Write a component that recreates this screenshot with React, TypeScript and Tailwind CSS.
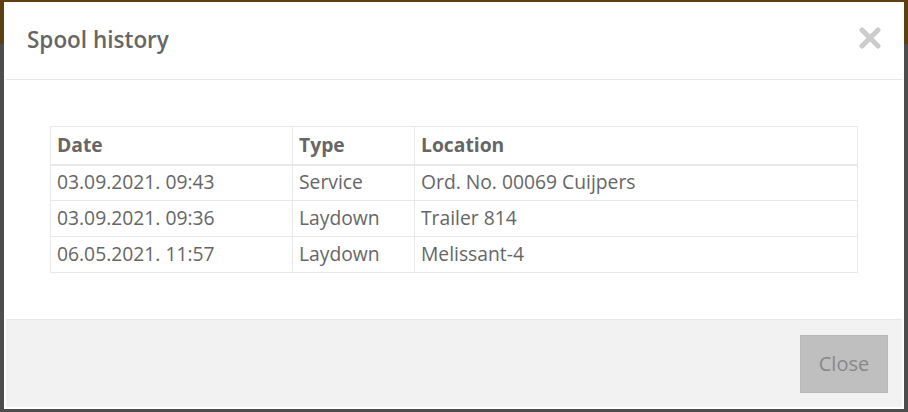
import React from 'react';

const rows = [
  { date: '03.09.2021. 09:43', type: 'Service', location: 'Ord. No. 00069 Cuijpers' },
  { date: '03.09.2021. 09:36', type: 'Laydown', location: 'Trailer 814' },
  { date: '06.05.2021. 11:57', type: 'Laydown', location: 'Melissant-4' },
];

export default function App() {
  return (
    <div
      className="relative w-[908px] h-[412px] overflow-hidden bg-[#4d4d4d]"
      style={{ fontFamily: '"Open Sans", "Noto Sans", sans-serif' }}
    >
      {/* page behind backdrop */}
      <div className="absolute left-0 top-0 w-full h-[44px] bg-[#5e3f12]" />

      {/* modal */}
      <div className="absolute left-[4px] top-[2px] w-[900px] h-[407px] bg-white flex flex-col border-x-2 border-b-2 border-white">
        <div className="h-[78px] flex items-center justify-between pl-[21px] pr-[20px] border-b border-[#e5e5e5] shrink-0">
          <h2 className="text-[22.5px] font-semibold text-[#666] leading-none">Spool history</h2>
          <button className="text-[#cccccc] w-[24px] h-[24px] flex items-center justify-center -mt-[6px]">
            <svg width="22" height="22" viewBox="0 0 22 22">
              <path d="M3 3 L19 19 M19 3 L3 19" stroke="currentColor" strokeWidth="5" strokeLinecap="round" />
            </svg>
          </button>
        </div>

        <div className="flex-1 px-[44px] pt-[46px]">
          <table className="w-full border-collapse text-[19.3px] text-[#666]">
            <thead>
              <tr className="h-[38px]">
                <th className="w-[242px] text-left font-bold px-[6px] border border-[#e8e8e8] border-b-2">Date</th>
                <th className="w-[122px] text-left font-bold px-[6px] border border-[#e8e8e8] border-b-2">Type</th>
                <th className="text-left font-bold px-[6px] border border-[#e8e8e8] border-b-2">Location</th>
              </tr>
            </thead>
            <tbody>
              {rows.map((r, i) => (
                <tr key={i} className="h-[36px]">
                  <td className="px-[6px] border border-[#e8e8e8]">{r.date}</td>
                  <td className="px-[6px] border border-[#e8e8e8]">{r.type}</td>
                  <td className="px-[6px] border border-[#e8e8e8]">{r.location}</td>
                </tr>
              ))}
            </tbody>
          </table>
        </div>

        <div className="h-[88px] shrink-0 bg-[#f2f2f2] border-t border-[#e6e6e6] flex items-start justify-end pt-[15px] pr-[14px]">
          <button className="w-[88px] h-[58px] bg-[#bfbfbf] text-[#888] text-[20px] border border-[#b8b8b8]">Close</button>
        </div>
      </div>
    </div>
  );
}
